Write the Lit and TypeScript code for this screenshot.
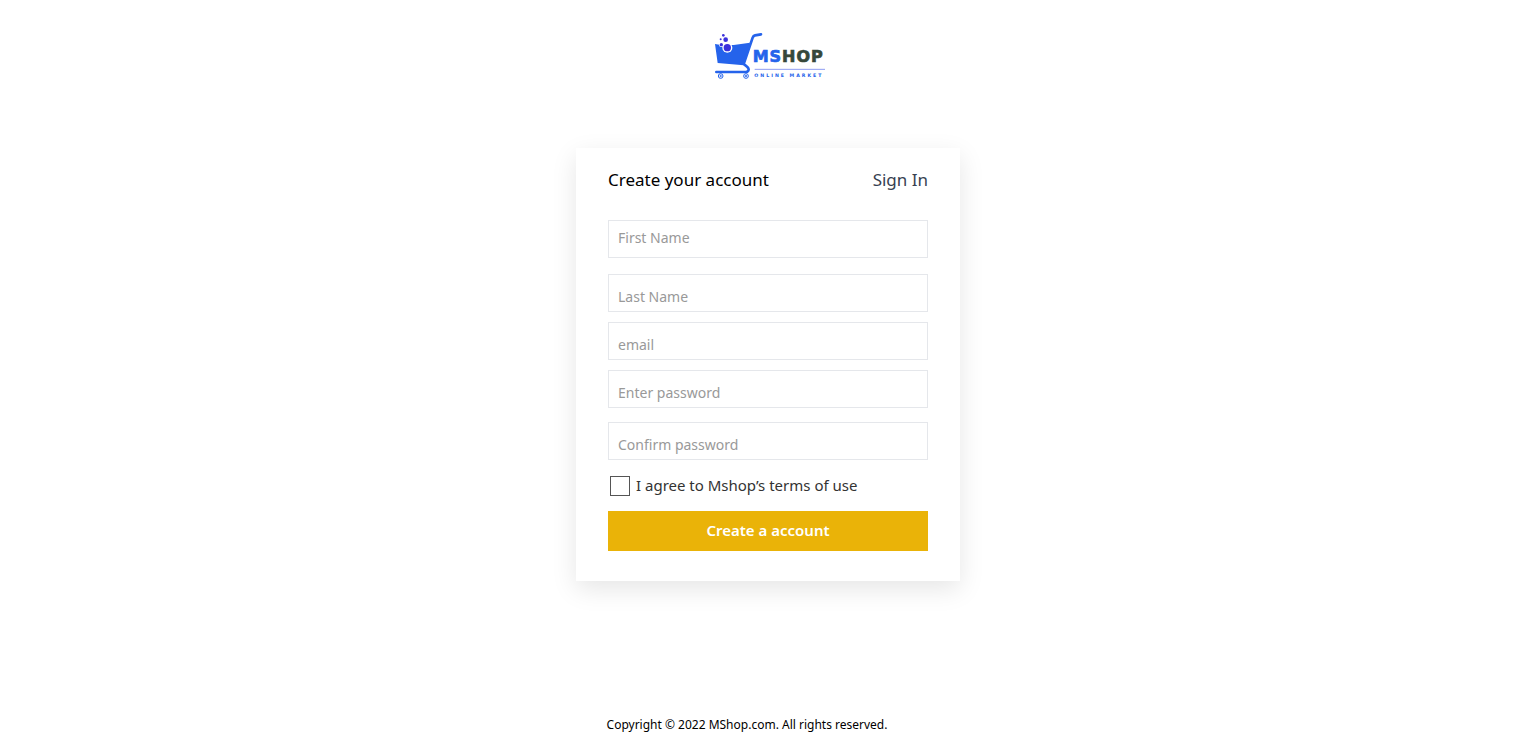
import { LitElement, html, css, svg } from "lit";
import { customElement, state } from "lit/decorators.js";

interface Field {
  id: string;
  label: string;
  type: string;
  complete: string;
  space: string;
}

const FIELDS: Field[] = [
  { id: "first-name", label: "First Name", type: "text", complete: "given-name", space: "first" },
  { id: "last-name", label: "Last Name", type: "text", complete: "family-name", space: "low wide" },
  { id: "email", label: "email", type: "email", complete: "email", space: "low" },
  { id: "password", label: "Enter password", type: "password", complete: "new-password", space: "low" },
  { id: "confirm", label: "Confirm password", type: "password", complete: "new-password", space: "low mid" },
];

@customElement("shop-logo")
export class ShopLogo extends LitElement {
  static styles = css`
    :host { display: block; line-height: 0; }
    .logo { width: 130px; height: 60px; }
    .name { font: 700 48px "DejaVu Sans", sans-serif; letter-spacing: 3px; stroke-width: 2px; }
    .tag { font: 700 14px "DejaVu Sans", sans-serif; letter-spacing: 6px; fill: #2563eb; }
    .blue { fill: #2563eb; stroke: #2563eb; }
    .green { fill: #36483a; stroke: #36483a; }
  `;

  render() {
    return html`<svg class="logo" viewBox="-6 0 390 180" role="img" aria-label="MShop online market">
      ${svg`
        <path fill="#2563eb" d="M30 57 L48 60 L86 60 L135 53 L116 121 L38 114 Z" />
        <path fill="none" stroke="#2563eb" stroke-width="8" stroke-linecap="round" stroke-linejoin="round"
          d="M168 28 L150 31 Q145 32 143 38 L117 114 Q116 118 121 121 L127 126 Q135 134 127 140 L123 141 L34 141" />
        <circle cx="67" cy="68" r="15" fill="#fff" />
        <circle cx="49" cy="59" r="7" fill="#fff" />
        <circle cx="67" cy="68" r="11" fill="#3b30dc" />
        <circle cx="62" cy="44" r="7" fill="#3b30dc" />
        <circle cx="49" cy="59" r="5" fill="#3b30dc" />
        <circle cx="47" cy="43" r="3" fill="#3b30dc" />
        <circle cx="55" cy="31" r="4" fill="#3b30dc" />
        <g fill="#fff" stroke="#2563eb" stroke-width="3">
          <circle cx="47" cy="153" r="7" /><circle cx="47" cy="153" r="2" />
          <circle cx="123" cy="153" r="7" /><circle cx="123" cy="153" r="2" />
        </g>
        <text class="name" x="143" y="111"><tspan class="blue">MS</tspan><tspan class="green">HOP</tspan></text>
        <path d="M149 133 H360" stroke="#8f9df2" stroke-width="3" />
        <text class="tag" x="148" y="156">ONLINE MARKET</text>
      `}
    </svg>`;
  }
}

@customElement("app-root")
export class AppRoot extends LitElement {
  static styles = css`
    :host {
      display: flex;
      flex-direction: column;
      min-height: 100vh;
      box-sizing: border-box;
      background: #fff;
      color: #000;
      font-family: "Segoe UI", "Noto Sans", sans-serif;
    }
    * { box-sizing: border-box; }
    header { display: flex; justify-content: center; padding: 25px 0 63px; }
    main { flex: 1; }
    .card {
      width: 25%;
      min-width: 320px;
      margin: 0 auto;
      padding: 16px 32px 30px;
      background: #fff;
      box-shadow: 0 8px 24px rgba(0, 0, 0, 0.1);
    }
    .top { display: flex; justify-content: space-between; align-items: center; margin-bottom: 24px; }
    h1 { margin: 0; font-size: 17px; line-height: 32px; font-weight: 400; }
    .signin { font-size: 17px; line-height: 32px; color: #374151; text-decoration: none; }
    .form { display: flex; flex-direction: column; }
    .box {
      width: 100%;
      height: 38px;
      padding: 0 9px 4px;
      border: 1px solid #e5e7eb;
      border-radius: 0;
      outline-color: #eab308;
      background: #fff;
      color: #000;
      font-family: inherit;
      font-size: 14px;
    }
    .box::placeholder { color: #999; opacity: 1; }
    .low { margin-top: 10px; padding: 6px 9px 0; }
    .wide { margin-top: 16px; }
    .mid { margin-top: 14px; }
    .terms {
      display: flex;
      align-items: center;
      gap: 6px;
      margin: 15px 0;
      padding-left: 2px;
      font-size: 15px;
      line-height: 21px;
      color: #333;
    }
    .tick { appearance: none; width: 20px; height: 20px; margin: 0; border: 1px solid #555; background: #fff; }
    .tick:checked { background: #eab308; }
    .submit {
      height: 40px;
      padding: 0 0 2px;
      border: 0;
      background: #eab308;
      color: #fff;
      font-family: inherit;
      font-size: 15px;
      font-weight: 600;
      cursor: pointer;
    }
    footer { padding: 0 42px 12px 0; font-size: 12px; line-height: 18px; text-align: center; }
  `;

  @state() private agreed = false;

  render() {
    return html`
      <header><shop-logo></shop-logo></header>
      <main>
        <section class="card">
          <div class="top">
            <h1>Create your account</h1>
            <a class="signin" href="#signin">Sign In</a>
          </div>
          <form class="form" @submit=${(e: Event) => e.preventDefault()}>
            ${FIELDS.map(
              (f) => html`
                <input class="box ${f.space}" id=${f.id} type=${f.type} aria-label=${f.label}
                  placeholder=${f.label} autocomplete=${f.complete} />
              `
            )}
            <label class="terms" for="terms">
              <input class="tick" id="terms" type="checkbox" .checked=${this.agreed}
                @change=${(e: Event) => (this.agreed = (e.target as HTMLInputElement).checked)} />
              <span>I agree to Mshop’s terms of use</span>
            </label>
            <button class="submit" type="submit">Create a account</button>
          </form>
        </section>
      </main>
      <footer>Copyright © 2022 MShop.com. All rights reserved.</footer>
    `;
  }
}
